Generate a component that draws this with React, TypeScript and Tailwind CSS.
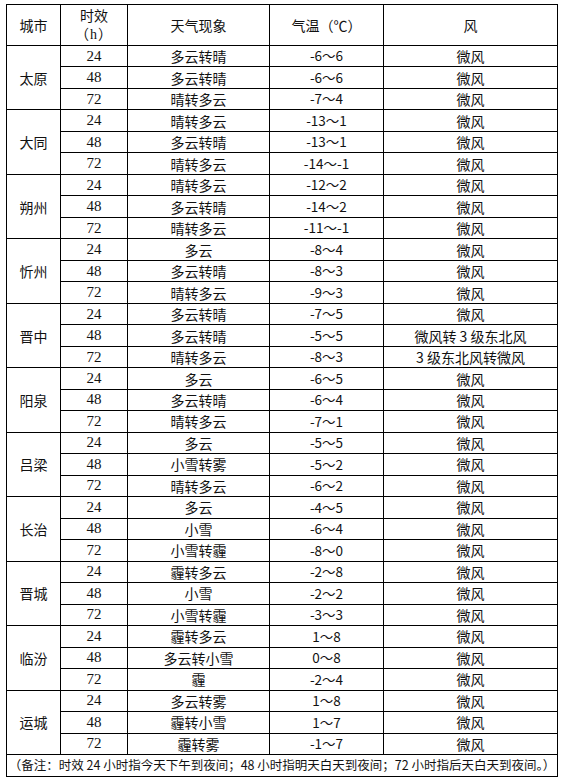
import React from "react";

type Row = [string, string, string, string];
const data: { city: string; rows: Row[] }[] = [
  { city: "太原", rows: [["24", "多云转晴", "-6～6", "微风"], ["48", "多云转晴", "-6～6", "微风"], ["72", "晴转多云", "-7～4", "微风"]] },
  { city: "大同", rows: [["24", "晴转多云", "-13～1", "微风"], ["48", "多云转晴", "-13～1", "微风"], ["72", "晴转多云", "-14～-1", "微风"]] },
  { city: "朔州", rows: [["24", "晴转多云", "-12～2", "微风"], ["48", "多云转晴", "-14～2", "微风"], ["72", "晴转多云", "-11～-1", "微风"]] },
  { city: "忻州", rows: [["24", "多云", "-8～4", "微风"], ["48", "多云转晴", "-8～3", "微风"], ["72", "晴转多云", "-9～3", "微风"]] },
  { city: "晋中", rows: [["24", "多云转晴", "-7～5", "微风"], ["48", "多云转晴", "-5～5", "微风转 3 级东北风"], ["72", "晴转多云", "-8～3", "3 级东北风转微风"]] },
  { city: "阳泉", rows: [["24", "多云", "-6～5", "微风"], ["48", "多云转晴", "-6～4", "微风"], ["72", "晴转多云", "-7～1", "微风"]] },
  { city: "吕梁", rows: [["24", "多云", "-5～5", "微风"], ["48", "小雪转雾", "-5～2", "微风"], ["72", "晴转多云", "-6～2", "微风"]] },
  { city: "长治", rows: [["24", "多云", "-4～5", "微风"], ["48", "小雪", "-6～4", "微风"], ["72", "小雪转霾", "-8～0", "微风"]] },
  { city: "晋城", rows: [["24", "霾转多云", "-2～8", "微风"], ["48", "小雪", "-2～2", "微风"], ["72", "小雪转霾", "-3～3", "微风"]] },
  { city: "临汾", rows: [["24", "霾转多云", "1～8", "微风"], ["48", "多云转小雪", "0～8", "微风"], ["72", "霾", "-2～4", "微风"]] },
  { city: "运城", rows: [["24", "多云转雾", "1～8", "微风"], ["48", "霾转小雪", "1～7", "微风"], ["72", "霾转雾", "-1～7", "微风"]] },
];

const cjk = "font-['Noto_Sans_CJK_SC',sans-serif]";
const base = "bg-white flex items-center justify-center text-[#111]";
const cell = `${base} leading-none`;

export default function App() {
  return (
    <div className="bg-white w-[563px] h-[782px] pt-[4px] pl-[6px]">
      <div className={`grid grid-cols-[53px_66px_141px_113px_173px] grid-rows-[40px_repeat(33,minmax(0,1fr))_21px] gap-px bg-black p-px w-[552px] h-[773px] ${cjk} text-[14px]`}>
        <div className={cell}>城市</div>
        <div className={`${base} flex-col gap-[4px]`}>
          <span className="leading-none">时效</span>
          <span className="leading-none tracking-[1px]">
            （<span className="font-['Liberation_Serif',serif]">h</span>）
          </span>
        </div>
        <div className={cell}>天气现象</div>
        <div className={cell}>气温（℃）</div>
        <div className={cell}>风</div>
        {data.map((g) => (
          <React.Fragment key={g.city}>
            <div className={`${cell} row-span-3`}>{g.city}</div>
            {g.rows.map((r, i) => (
              <React.Fragment key={i}>
                <div className={`${cell} font-['Liberation_Serif',serif] text-[15px]`}>{r[0]}</div>
                <div className={cell}>{r[1]}</div>
                <div className={`${cell} text-[13.5px]`}>{r[2]}</div>
                <div className={cell}>{r[3]}</div>
              </React.Fragment>
            ))}
          </React.Fragment>
        ))}
        <div className={`${cell} col-span-5 text-[12.5px] text-[#7a7a7a]`}>
          （备注：时效 24 小时指今天下午到夜间；48 小时指明天白天到夜间；72 小时指后天白天到夜间。）
        </div>
      </div>
    </div>
  );
}
